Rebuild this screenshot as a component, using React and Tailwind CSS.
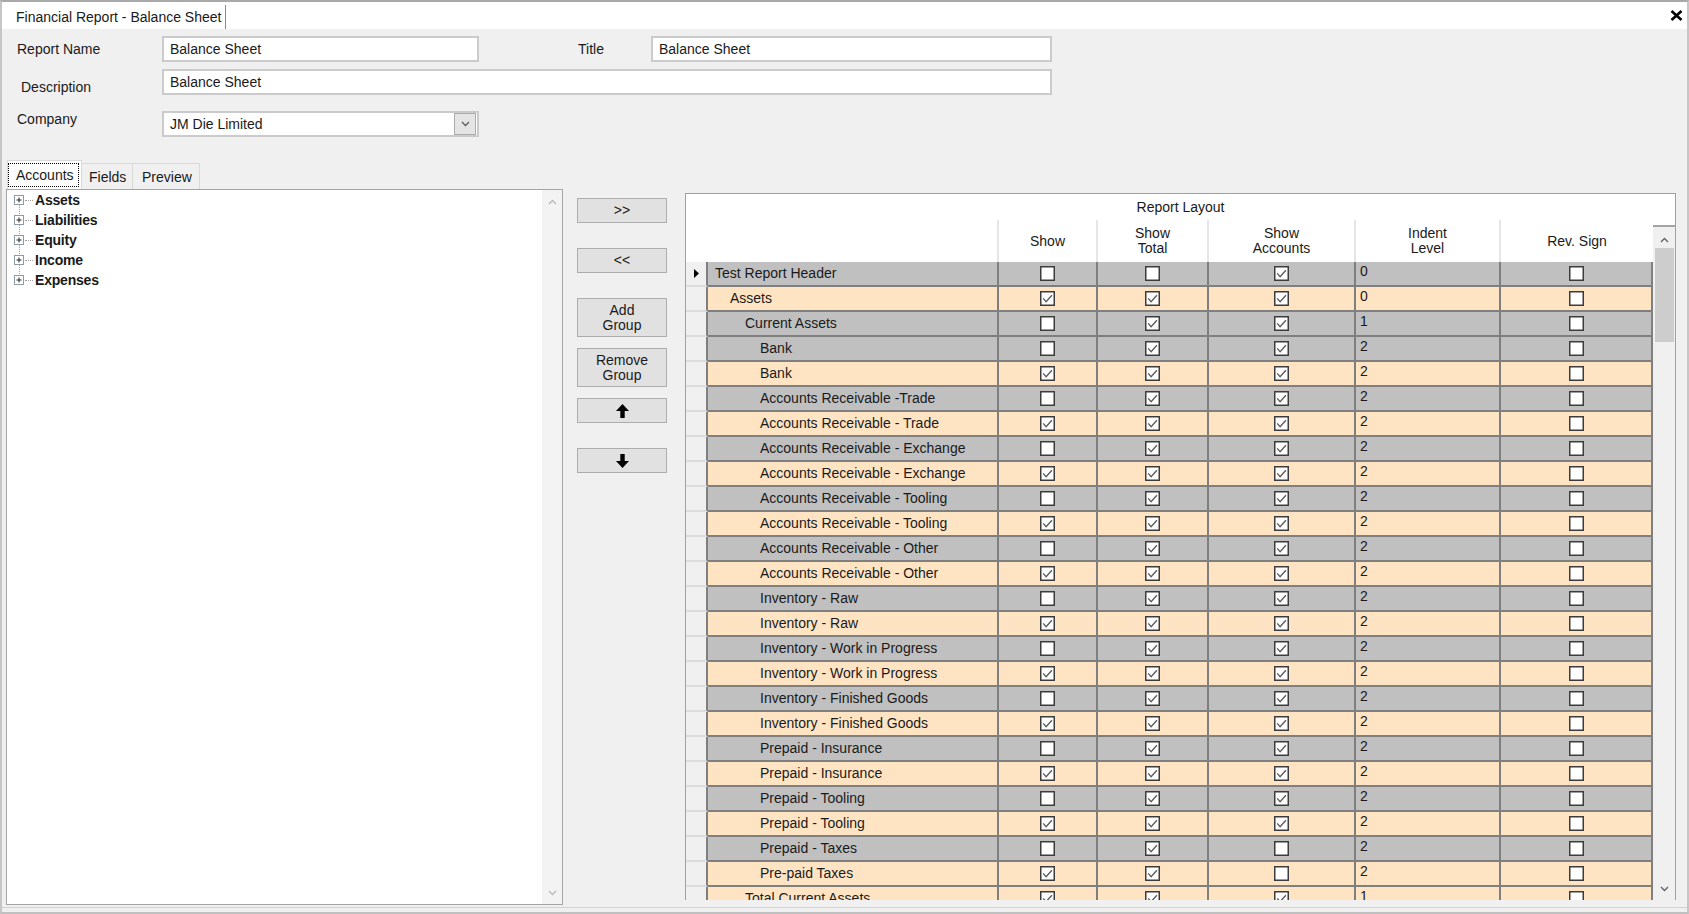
import React from "react";

const rows = [
  ["Test Report Header", 0, "g", 0, 0, 1, 0],
  ["Assets", 1, "p", 1, 1, 1, 0],
  ["Current Assets", 2, "g", 0, 1, 1, 1],
  ["Bank", 3, "g", 0, 1, 1, 2],
  ["Bank", 3, "p", 1, 1, 1, 2],
  ["Accounts Receivable -Trade", 3, "g", 0, 1, 1, 2],
  ["Accounts Receivable - Trade", 3, "p", 1, 1, 1, 2],
  ["Accounts Receivable - Exchange", 3, "g", 0, 1, 1, 2],
  ["Accounts Receivable - Exchange", 3, "p", 1, 1, 1, 2],
  ["Accounts Receivable - Tooling", 3, "g", 0, 1, 1, 2],
  ["Accounts Receivable - Tooling", 3, "p", 1, 1, 1, 2],
  ["Accounts Receivable - Other", 3, "g", 0, 1, 1, 2],
  ["Accounts Receivable - Other", 3, "p", 1, 1, 1, 2],
  ["Inventory - Raw", 3, "g", 0, 1, 1, 2],
  ["Inventory - Raw", 3, "p", 1, 1, 1, 2],
  ["Inventory - Work in Progress", 3, "g", 0, 1, 1, 2],
  ["Inventory - Work in Progress", 3, "p", 1, 1, 1, 2],
  ["Inventory - Finished Goods", 3, "g", 0, 1, 1, 2],
  ["Inventory - Finished Goods", 3, "p", 1, 1, 1, 2],
  ["Prepaid - Insurance", 3, "g", 0, 1, 1, 2],
  ["Prepaid - Insurance", 3, "p", 1, 1, 1, 2],
  ["Prepaid - Tooling", 3, "g", 0, 1, 1, 2],
  ["Prepaid - Tooling", 3, "p", 1, 1, 1, 2],
  ["Prepaid - Taxes", 3, "g", 0, 1, 0, 2],
  ["Pre-paid Taxes", 3, "p", 1, 1, 0, 2],
  ["Total Current Assets", 2, "p", 1, 1, 1, 1],
];

// indent of the first column text per depth
const pads = ["pl-[7px]", "pl-[22px]", "pl-[37px]", "pl-[52px]"];

const treeItems = ["Assets", "Liabilities", "Equity", "Income", "Expenses"];

function Check({ on }) {
  return (
    <svg width="15" height="15" viewBox="0 0 15 15">
      <rect x="0.75" y="0.75" width="13.5" height="13.5" fill="#fff" stroke="#3c3c3c" strokeWidth="1.5" />
      {on ? <path d="M3.2 7.4 L6.1 10.6 L11.9 4.3" fill="none" stroke="#5c5c5c" strokeWidth="1.4" /> : null}
    </svg>
  );
}

function Chevron({ up, color }) {
  return (
    <svg width="9" height="6" viewBox="0 0 9 6">
      <path d={up ? "M1 5 L4.5 1.5 L8 5" : "M1 1 L4.5 4.5 L8 1"} fill="none" stroke={color} strokeWidth="1.3" />
    </svg>
  );
}

function Arrow({ down }) {
  return (
    <svg width="13" height="14" viewBox="0 0 13 14" className={down ? "rotate-180" : ""}>
      <path d="M6.5 0 L13 7 L8.7 7 L8.7 14 L4.3 14 L4.3 7 L0 7 Z" fill="#000" />
    </svg>
  );
}

function Field({ className, children }) {
  return (
    <div className={`h-[26px] bg-white border-2 border-[#cbcbcb] pl-[6px] flex items-center ${className}`}>
      {children}
    </div>
  );
}

function Btn({ tall, className, children }) {
  return (
    <div
      className={`w-[90px] ${tall ? "h-[39px]" : "h-[25px]"} bg-[#e1e1e1] border border-[#adadad] flex flex-col items-center justify-center leading-[15px] text-center ${className}`}
    >
      {children}
    </div>
  );
}

export default function App() {
  return (
    <div className="w-[1689px] h-[914px] overflow-hidden bg-[#f0f0f0] border-2 border-t-[#a9a9a9] border-x-[#c6c6c6] border-b-[#c0c0c0] flex flex-col font-['Liberation_Sans',Arial,sans-serif] text-[14px] leading-[16px] text-[#1a1a1a]">
      {/* window tab strip */}
      <div className="h-[27px] bg-white flex items-stretch shrink-0">
        <div className="w-[224px] pl-[14px] border-r border-[#8a8a8a] mt-[3px] flex items-center">
          Financial Report - Balance Sheet
        </div>
        <div className="ml-auto mr-[4px] flex items-center">
          <svg width="13" height="11" viewBox="0 0 13 11">
            <path d="M1.5 1 L11.5 10 M11.5 1 L1.5 10" stroke="#000" strokeWidth="2.6" />
          </svg>
        </div>
      </div>

      {/* form */}
      <div className="flex items-start pl-[15px] mt-[7px] shrink-0">
        <div className="w-[145px] mt-[5px]">Report Name</div>
        <Field className="w-[317px]">Balance Sheet</Field>
        <div className="ml-[99px] w-[73px] mt-[5px]">Title</div>
        <Field className="w-[401px]">Balance Sheet</Field>
      </div>
      <div className="flex items-start pl-[15px] mt-[7px] shrink-0">
        <div className="w-[145px] mt-[10px] pl-[4px]">Description</div>
        <Field className="w-[890px]">Balance Sheet</Field>
      </div>
      <div className="flex items-start pl-[15px] mt-[16px] shrink-0">
        <div className="w-[145px]">Company</div>
        <Field className="w-[317px] pr-[1px]">
          <span className="flex-1">JM Die Limited</span>
          <div className="w-[22px] h-[22px] bg-[#e5e5e5] border border-[#acacac] flex items-center justify-center">
            <Chevron color="#5a5a5a" />
          </div>
        </Field>
      </div>

      {/* tabs */}
      <div className="flex items-end h-[29px] pl-[5px] mt-[23px] shrink-0">
        <div className="w-[75px] h-[29px] bg-white border border-b-0 border-[#d9d9d9] pr-[2px] pt-[2px] pb-[2px]">
          <div className="h-full border border-dotted border-black flex items-center pl-[7px]">Accounts</div>
        </div>
        <div className="w-[51px] h-[26px] bg-[#f0f0f0] border-t border-r border-[#d9d9d9] pl-[7px] flex items-center">
          Fields
        </div>
        <div className="w-[67px] h-[26px] bg-[#f0f0f0] border-t border-r border-[#d9d9d9] pl-[9px] flex items-center">
          Preview
        </div>
      </div>

      {/* main */}
      <div className="flex items-start h-[716px] shrink-0">
        {/* account tree */}
        <div className="ml-[4px] w-[557px] h-full border border-[#a5a5a5] bg-white flex">
          <div className="flex-1 relative">
            <span className="absolute left-[12px] top-[10px] h-[80px] border-l border-dotted border-[#a0a0a0]" />
            {treeItems.map((t) => (
              <div key={t} className="h-[20px] flex items-center pl-[7px]">
                <svg width="10" height="10" viewBox="0 0 10 10" className="relative">
                  <rect x="0.5" y="0.5" width="9" height="9" fill="#fff" stroke="#8f9aa8" />
                  <path d="M2.5 5 H7.5 M5 2.5 V7.5" stroke="#222" strokeWidth="1" />
                </svg>
                <span className="w-[8px] ml-[1px] border-t border-dotted border-[#a0a0a0]" />
                <span className="ml-[2px] font-bold tracking-[-0.2px]">{t}</span>
              </div>
            ))}
          </div>
          <div className="w-[20px] bg-[#f3f3f3] flex flex-col items-center justify-between pt-[9px] pb-[8px]">
            <Chevron up color="#b9b9b9" />
            <Chevron color="#b9b9b9" />
          </div>
        </div>

        {/* move buttons */}
        <div className="ml-[14px] w-[90px] flex flex-col pt-[9px]">
          <Btn>&gt;&gt;</Btn>
          <Btn className="mt-[25px]">&lt;&lt;</Btn>
          <Btn tall className="mt-[25px]">
            <span>Add</span>
            <span>Group</span>
          </Btn>
          <Btn tall className="mt-[11px]">
            <span>Remove</span>
            <span>Group</span>
          </Btn>
          <Btn className="mt-[11px]">
            <Arrow />
          </Btn>
          <Btn className="mt-[25px]">
            <Arrow down />
          </Btn>
        </div>

        {/* report layout grid */}
        <div className="ml-[18px] mt-[4px] w-[991px] h-[707px] border-l border-t border-r border-[#a0a0a0] bg-white flex flex-col overflow-hidden">
          <div className="h-[26px] shrink-0 flex items-center justify-center">Report Layout</div>
          <div className="flex flex-1 min-h-0">
            <div className="w-[967px] flex flex-col overflow-hidden">
              <div className="h-[42px] shrink-0 flex leading-[15px] text-center">
                <div className="w-[313px] border-r-2 border-[#e6e6e6]" />
                <div className="w-[99px] border-r-2 border-[#e6e6e6] flex items-center justify-center">Show</div>
                <div className="w-[111px] border-r-2 border-[#e6e6e6] flex flex-col items-center justify-center">
                  <span>Show</span>
                  <span>Total</span>
                </div>
                <div className="w-[147px] border-r-2 border-[#e6e6e6] flex flex-col items-center justify-center">
                  <span>Show</span>
                  <span>Accounts</span>
                </div>
                <div className="w-[145px] border-r-2 border-[#e6e6e6] flex flex-col items-center justify-center">
                  <span>Indent</span>
                  <span>Level</span>
                </div>
                <div className="w-[152px] flex items-center justify-center">Rev. Sign</div>
              </div>

              {rows.map(([name, depth, tone, show, total, acc, level], i) => (
                <div key={i} className="h-[25px] shrink-0 flex">
                  <div className="w-[22px] bg-[#f0f0f0] border-b-2 border-b-[#dcdcdc] border-r-2 border-r-[#7f7f7f] flex items-center justify-center">
                    {i === 0 ? (
                      <svg width="5" height="9" viewBox="0 0 5 9">
                        <path d="M0 0 L5 4.5 L0 9 Z" fill="#000" />
                      </svg>
                    ) : null}
                  </div>
                  <div className={`flex ${tone === "g" ? "bg-[#c0c0c0]" : "bg-[#ffe4c4]"}`}>
                    <div className={`w-[291px] border-r-2 border-b-2 border-[#7f7f7f] flex items-center pb-[2px] whitespace-nowrap ${pads[depth]}`}>
                      {name}
                    </div>
                    <div className="w-[99px] border-r-2 border-b-2 border-[#7f7f7f] flex items-center justify-center">
                      <Check on={show} />
                    </div>
                    <div className="w-[111px] border-r-2 border-b-2 border-[#7f7f7f] flex items-center justify-center">
                      <Check on={total} />
                    </div>
                    <div className="w-[147px] border-r-2 border-b-2 border-[#7f7f7f] flex items-center justify-center">
                      <Check on={acc} />
                    </div>
                    <div className="w-[145px] border-r-2 border-b-2 border-[#7f7f7f] pl-[4px] pt-[1px]">{level}</div>
                    <div className="w-[152px] border-r-2 border-b-2 border-[#7f7f7f] flex items-center justify-center">
                      <Check on={false} />
                    </div>
                  </div>
                </div>
              ))}
            </div>

            {/* scrollbar */}
            <div className="w-[22px] flex flex-col">
              <div className="h-[7px] bg-white border-b-2 border-[#a3a3a3]" />
              <div className="flex-1 bg-[#f0f0f0] flex flex-col">
                <div className="h-[21px] flex items-center justify-center pt-[4px]">
                  <Chevron up color="#606060" />
                </div>
                <div className="h-[94px] ml-[2px] mr-[1px] bg-[#cdcdcd]" />
                <div className="flex-1" />
                <div className="h-[22px] flex items-center justify-center">
                  <Chevron color="#606060" />
                </div>
              </div>
            </div>
          </div>
        </div>
      </div>

      <div className="flex-1 mt-[2px] border-t border-[#d2d2d2]" />
    </div>
  );
}
